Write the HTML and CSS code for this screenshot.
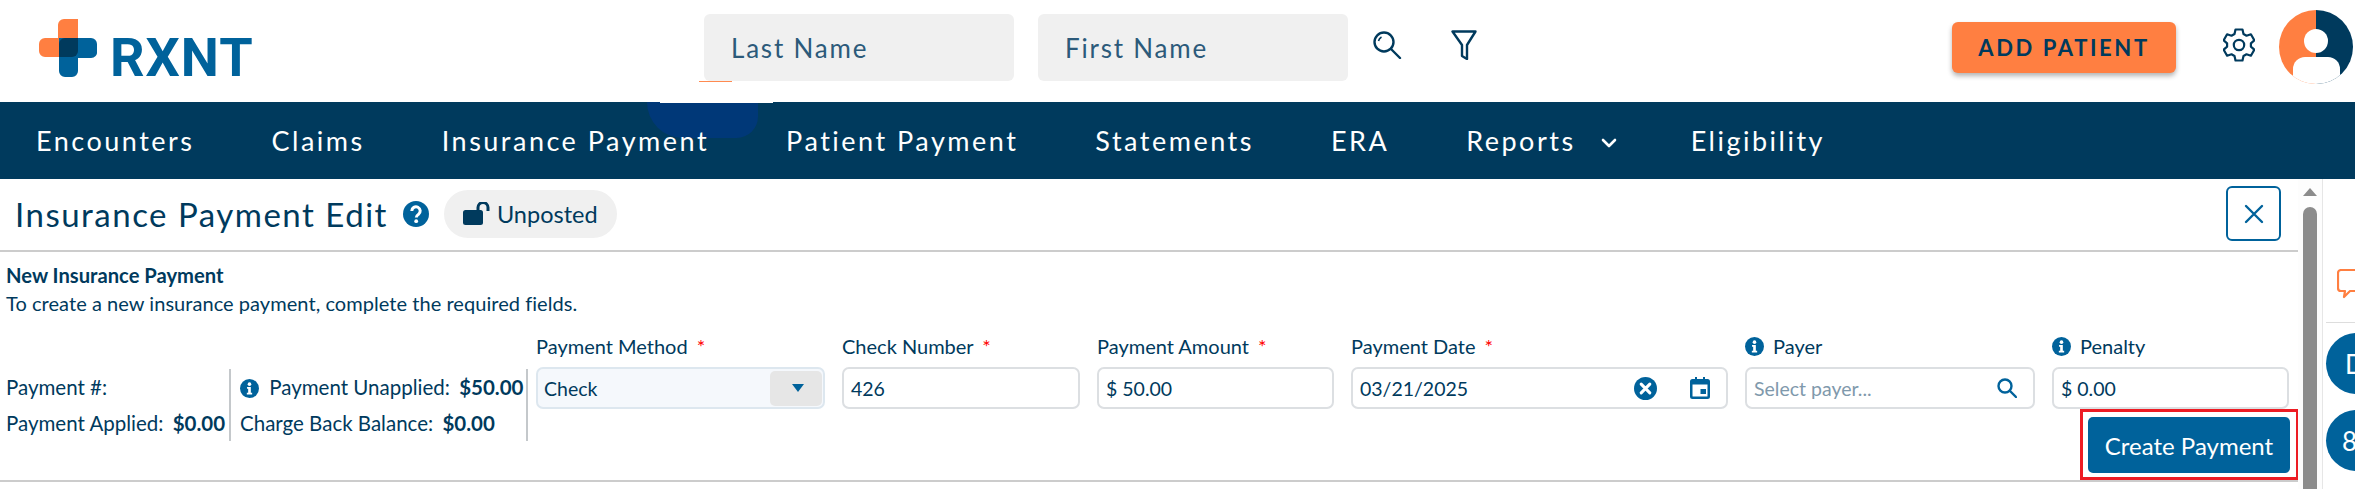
FILE: index.html
```html
<!DOCTYPE html>
<html lang="en">
<head>
  <meta charset="UTF-8" />
  <title>RXNT – Insurance Payment Edit</title>
  <link rel="stylesheet" href="styles.css">
</head>
<body>
  <header class="topbar">
    <a class="logo">
      <svg class="logo-mark" viewBox="0 0 58 58" width="58" height="58">
        <path fill="#ff7f41" d="M25 0h14v38H6a6 6 0 0 1-6-6V25a6 6 0 0 1 6-6h13V6a6 6 0 0 1 6-6z"/>
        <path fill="#00629b" d="M20 19h32a6 6 0 0 1 6 6v7a6 6 0 0 1-6 7H39v13a6 6 0 0 1-6 6H26a6 6 0 0 1-6-6z"/>
        <path fill="#003a5d" d="M26 19h13v13a6 6 0 0 1-6 6H20V25a6 6 0 0 1 6-6z"/>
      </svg>
      <span class="logo-text">RXNT</span>
    </a>
    <div class="patient-search">
      <div class="search-box">Last Name</div>
      <div class="search-box first">First Name</div>
      <svg class="icon-search" viewBox="0 0 30 28" width="30" height="28" fill="none" stroke="#003a5d" stroke-width="2.4">
        <circle cx="12" cy="11" r="9.5"/>
        <path d="M19 18l9 9" stroke-linecap="round"/>
        <path d="M6.5 10a6 6 0 0 1 3-4" stroke-width="1.6"/>
      </svg>
      <svg class="icon-filter" viewBox="0 0 26 30" width="26" height="30" fill="none" stroke="#003a5d" stroke-width="2.4" stroke-linejoin="round">
        <path d="M1.5 1.5h23L16 15v14l-5-3V15z"/>
      </svg>
    </div>
    <button class="add-patient">ADD PATIENT</button>
    <svg class="icon-gear" viewBox="0 0 32 34" width="32" height="34" fill="none" stroke="#003a5d" stroke-width="2.2" stroke-linejoin="round">
      <path d="M12.5 1.5h7l1 4.5 3 1.7 4.4-1.4 3.4 6-3.4 3.1v3.2l3.4 3.1-3.4 6-4.4-1.4-3 1.7-1 4.5h-7l-1-4.5-3-1.7-4.4 1.4-3.4-6 3.4-3.1v-3.2L.7 12.3l3.4-6 4.4 1.4 3-1.7z"/>
      <circle cx="16" cy="17" r="5.2"/>
    </svg>
    <div class="avatar">
      <span class="avatar-head"></span>
      <span class="avatar-body"></span>
    </div>
  </header>

  <nav class="mainnav">
    <span class="nav-smudge"></span>
    <span class="nav-strip"></span>
    <span class="nav-line"></span>
    <a>Encounters</a>
    <a>Claims</a>
    <a>Insurance Payment</a>
    <a>Patient Payment</a>
    <a>Statements</a>
    <a>ERA</a>
    <a class="has-menu">Reports<svg viewBox="0 0 16 10" width="16" height="10" fill="none" stroke="#fff" stroke-width="2.6" stroke-linecap="round" stroke-linejoin="round"><path d="M2 2l6 6 6-6"/></svg></a>
    <a>Eligibility</a>
  </nav>

  <div class="workspace">
    <main class="content">
      <div class="title-row">
        <h1>Insurance Payment Edit</h1>
        <svg class="icon-help" viewBox="0 0 26 26" width="26" height="26">
          <circle cx="13" cy="13" r="13" fill="#00629b"/>
          <path d="M8.8 10a4.2 4.2 0 1 1 6.6 3.4c-1.4 1-2.1 1.5-2.1 3" fill="none" stroke="#fff" stroke-width="3"/>
          <circle cx="13.2" cy="20.2" r="1.9" fill="#fff"/>
        </svg>
        <div class="status-chip">
          <svg viewBox="0 0 27 23" width="27" height="23">
            <rect x="0" y="8" width="20" height="15" rx="2.5" fill="#003a5d"/>
            <path d="M15 8V5.5a5 5 0 0 1 10 0V9" fill="none" stroke="#003a5d" stroke-width="3"/>
          </svg>
          <span>Unposted</span>
        </div>
        <button class="close-btn">
          <svg viewBox="0 0 20 20" width="20" height="20" stroke="#00629b" stroke-width="2.4" stroke-linecap="round"><path d="M2 2l16 16M18 2L2 18"/></svg>
        </button>
      </div>

      <section class="payment-form">
        <h2>New Insurance Payment</h2>
        <p>To create a new insurance payment, complete the required fields.</p>
        <div class="form-row">
          <div class="stats stats-left">
            <div>Payment #:</div>
            <div>Payment Applied: <b>$0.00</b></div>
          </div>
          <div class="stats stats-right">
            <div>
              <svg class="icon-info" viewBox="0 0 20 20" width="19" height="19"><circle cx="10" cy="10" r="10" fill="#00629b"/><circle cx="10" cy="5.4" r="1.9" fill="#fff"/><path d="M7.4 8.4h4v6h1.4v1.8H7.2v-1.8h1.4v-4.2H7.4z" fill="#fff"/></svg>
              Payment Unapplied: <b>$50.00</b>
            </div>
            <div>Charge Back Balance: <b>$0.00</b></div>
          </div>
          <div class="fields">
            <div class="field">
              <label>Payment Method <i>*</i></label>
              <div class="control select">
                <span>Check</span>
                <span class="select-btn"><svg viewBox="0 0 12 8" width="12" height="8"><path d="M0 0h12L6 8z" fill="#00629b"/></svg></span>
              </div>
            </div>
            <div class="field">
              <label>Check Number <i>*</i></label>
              <div class="control">426</div>
            </div>
            <div class="field">
              <label>Payment Amount <i>*</i></label>
              <div class="control">$ 50.00</div>
            </div>
            <div class="field">
              <label>Payment Date <i>*</i></label>
              <div class="control">
                <span>03/21/2025</span>
                <svg class="icon-clear" viewBox="0 0 24 24" width="23" height="23"><circle cx="12" cy="12" r="12" fill="#00629b"/><path d="M7.5 7.5l9 9M16.5 7.5l-9 9" stroke="#fff" stroke-width="3.2" stroke-linecap="round"/></svg>
                <svg class="icon-date" viewBox="0 0 20 22" width="20" height="22"><path d="M2.500 2H5V0h2v2h6V0h2v2h2.500A2.500 2.500 0 0 1 20 4.500v15a2.500 2.500 0 0 1-2.500 2.500h-15A2.500 2.500 0 0 1 0 19.500v-15A2.500 2.500 0 0 1 2.500 2zM2.500 7.500v11.500a.5.5 0 0 0 .5.5h14a.5.5 0 0 0 .5-.5V7.500z" fill="#00629b"/><rect x="10.500" y="12" width="5.500" height="5" fill="#00629b"/></svg>
              </div>
            </div>
            <div class="field">
              <label class="with-info">
                <svg class="icon-info" viewBox="0 0 20 20" width="19" height="19"><circle cx="10" cy="10" r="10" fill="#00629b"/><circle cx="10" cy="5.4" r="1.9" fill="#fff"/><path d="M7.4 8.4h4v6h1.4v1.8H7.2v-1.8h1.4v-4.2H7.4z" fill="#fff"/></svg>
                <span>Payer</span>
              </label>
              <div class="control">
                <span class="placeholder">Select payer...</span>
                <svg class="icon-lookup" viewBox="0 0 20 20" width="20" height="20" fill="none" stroke="#00629b" stroke-width="2.400"><circle cx="8" cy="8" r="6.500"/><path d="M13 13l6 6" stroke-linecap="round"/></svg>
              </div>
            </div>
            <div class="field">
              <label class="with-info">
                <svg class="icon-info" viewBox="0 0 20 20" width="19" height="19"><circle cx="10" cy="10" r="10" fill="#00629b"/><circle cx="10" cy="5.4" r="1.9" fill="#fff"/><path d="M7.4 8.4h4v6h1.4v1.8H7.2v-1.8h1.4v-4.2H7.4z" fill="#fff"/></svg>
                <span>Penalty</span>
              </label>
              <div class="control">$ 0.00</div>
            </div>
            <div class="create-wrap">
              <button class="create-btn">Create Payment</button>
            </div>
          </div>
        </div>
      </section>
    </main>

    <div class="scrollbar">
      <span class="scroll-up"></span>
      <span class="scroll-thumb"></span>
    </div>

    <aside class="side">
      <svg class="icon-chat" viewBox="0 0 30 30" width="30" height="30" fill="none" stroke="#ff7f41" stroke-width="2.200" stroke-linejoin="round">
        <path d="M4 1h26v21H13l-6 6 1-6H4a3 3 0 0 1-3-3V4a3 3 0 0 1 3-3z"/>
      </svg>
      <div class="side-rule"></div>
      <div class="side-badge top">D</div>
      <div class="side-badge">8</div>
    </aside>
  </div>
</body>
</html>
```

FILE: styles.css
```css
:root {
  --navy: #003a5d;
  --blue: #00629b;
  --orange: #ff7f41;
  --field-border: #dcdfe2;
}

* {
  box-sizing: border-box;
}

html, body {
  height: 100%;
}

body {
  margin: 0;
  font-family: "Lato", sans-serif;
  color: var(--navy);
  background: #fff;
  overflow: hidden;
}

button {
  font-family: inherit;
  border: none;
}

/* top bar */
.topbar {
  display: flex;
  align-items: flex-start;
  height: 102px;
}

.logo {
  display: flex;
  align-items: flex-end;
  margin: 19px 0 0 39px;
  width: 665px;
}

.logo-mark {
  display: block;
}

.logo-text {
  margin-left: 13px;
  font-family: "Roboto", sans-serif;
  font-weight: 700;
  font-size: 54px;
  line-height: 39px;
  letter-spacing: 1px;
  color: var(--blue);
}

.patient-search {
  display: flex;
  align-items: flex-start;
  margin-top: 14px;
  width: 1248px;
}

.search-box {
  width: 310px;
  height: 67px;
  padding-left: 27px;
  background: #f0f0f0;
  border-radius: 6px;
  font-size: 26px;
  line-height: 68px;
  letter-spacing: 1.8px;
  color: #2c5a7a;
}

.search-box.first {
  margin-left: 24px;
  width: 310px;
}

.icon-search {
  margin: 17px 0 0 24px;
}

.icon-filter {
  margin: 16px 0 0 49px;
}

.add-patient {
  width: 224px;
  height: 51px;
  margin-top: 22px;
  background: var(--orange);
  border-radius: 6px;
  box-shadow: 0 3px 5px rgba(0, 0, 0, 0.3);
  color: var(--navy);
  font-weight: 700;
  font-size: 22px;
  letter-spacing: 2.6px;
}

.icon-gear {
  margin: 28px 0 0 47px;
}

.avatar {
  position: relative;
  width: 74px;
  height: 74px;
  margin: 10px 0 0 24px;
  border-radius: 50%;
  overflow: hidden;
  background: linear-gradient(to right, var(--orange) 50%, var(--navy) 50%);
}

.avatar-head {
  position: absolute;
  left: 25px;
  top: 19px;
  width: 24px;
  height: 24px;
  border-radius: 50%;
  background: #fff;
}

.avatar-body {
  position: absolute;
  left: 14px;
  top: 47px;
  width: 47px;
  height: 34px;
  border-radius: 12px 12px 0 0;
  background: #fff;
}

/* main nav */
.mainnav {
  position: relative;
  display: flex;
  align-items: center;
  gap: 77px;
  height: 77px;
  padding-left: 36px;
  background: var(--navy);
}

.mainnav a {
  position: relative;
  color: #fff;
  font-size: 27px;
  letter-spacing: 2.5px;
}

.has-menu svg {
  margin: 0 -3px 0 25px;
  vertical-align: 3px;
}

/* leftovers from the screen capture */
.nav-smudge {
  position: absolute;
  left: 647px;
  top: 0;
  width: 111px;
  height: 36px;
  background: #003878;
  border-radius: 0 0 30px 50px;
}

.nav-strip {
  position: absolute;
  left: 660px;
  top: 0;
  width: 113px;
  height: 1px;
  background: #fff;
}

.nav-line {
  position: absolute;
  left: 699px;
  top: -21px;
  width: 33px;
  height: 1px;
  background: #ff8a50;
}

/* workspace */
.workspace {
  display: flex;
  height: 310px;
}

.content {
  width: 2298px;
  flex: none;
}

.title-row {
  display: flex;
  align-items: center;
  height: 73px;
  padding: 0 17px 2px 15px;
  border-bottom: 2px solid #ccc;
}

h1 {
  margin: 0;
  font-size: 33px;
  font-weight: 400;
  letter-spacing: 1.5px;
  color: var(--navy);
}

.icon-help {
  margin-left: 15px;
}

.status-chip {
  display: flex;
  align-items: center;
  gap: 7px;
  height: 48px;
  margin-left: 15px;
  padding: 0 19px;
  background: #f0f0f0;
  border-radius: 24px;
  font-size: 23.5px;
}

.close-btn {
  display: flex;
  align-items: center;
  justify-content: center;
  width: 55px;
  height: 55px;
  margin-left: auto;
  padding: 0;
  background: #fff;
  border: 2px solid var(--blue);
  border-radius: 6px;
}

.payment-form {
  height: 230px;
  padding: 12px 0 0 6px;
  border-bottom: 2px solid #ccc;
}

h2 {
  margin: 0;
  font-size: 20.2px;
  font-weight: 700;
  line-height: 22px;
}

.payment-form p {
  margin: 6px 0 0;
  font-size: 20px;
  letter-spacing: 0.05px;
  line-height: 22px;
}

.form-row {
  display: flex;
  margin-top: 18px;
  font-size: 20px;
}

.stats {
  display: flex;
  flex-direction: column;
  gap: 14px;
  height: 72px;
  margin-top: 37px;
  font-size: 20.5px;
  line-height: 22px;
  padding-top: 7px;
  border-right: 2px solid #c4c8cb;
}

.stats b {
  font-weight: 700;
  margin-left: 4px;
}

.stats-left {
  width: 225px;
  white-space: nowrap;
}

.stats-right {
  width: 297px;
  padding-left: 9px;
  white-space: nowrap;
}

.stats-right .icon-info {
  vertical-align: -3px;
  margin-right: 5px;
}

.fields {
  display: grid;
  grid-template-columns: 289px 238px 237px 377px 290px 237px;
  column-gap: 17px;
  align-content: start;
  margin-left: 8px;
}

.field label {
  display: block;
  height: 28px;
  margin-bottom: 7px;
  line-height: 28px;
}

.field label i {
  color: #f00;
  font-style: normal;
  margin-left: 4px;
}

.field .with-info {
  display: flex;
  align-items: center;
  gap: 9px;
}

.control {
  display: flex;
  align-items: center;
  height: 42px;
  padding: 0 16px 0 7px;
  background: #fff;
  border: 2px solid var(--field-border);
  border-radius: 7px;
  font-size: 19.5px;
}

.control > svg {
  flex: none;
}

.icon-clear {
  margin-left: auto;
}

.icon-date {
  margin-left: 33px;
}

.icon-lookup {
  margin-left: auto;
}

.placeholder {
  color: #7f99ac;
}

.select {
  padding: 0 1px 0 6px;
  background: #f5f8fc;
  border-color: #dde7ef;
  justify-content: space-between;
}

.select-btn {
  display: flex;
  align-items: center;
  justify-content: center;
  width: 52px;
  height: 35px;
  padding-left: 3px;
  background: #e6e6e6;
  border-radius: 5px;
}

.create-wrap {
  grid-column: 6;
  justify-self: end;
  margin-right: -10px;
  padding: 5px 6px 4px 5px;
  border: 3px solid #ed1c24;
}

.create-btn {
  display: block;
  width: 202px;
  height: 56px;
  background: var(--blue);
  border-radius: 5px;
  color: #fff;
  font-size: 24px;
}

/* scrollbar */
.scrollbar {
  display: flex;
  flex-direction: column;
  align-items: center;
  width: 25px;
  flex: none;
  padding: 9px 1px 0 0;
  background: #fdfdfd;
  border-right: 1px solid #e6e6e6;
}

.scroll-up {
  width: 0;
  height: 0;
  border-left: 7px solid transparent;
  border-right: 7px solid transparent;
  border-bottom: 8px solid #8c8c8c;
}

.scroll-thumb {
  width: 14px;
  flex: 1;
  margin-top: 11px;
  background: #8c8c8c;
  border-radius: 7px 7px 0 0;
}

/* right rail, cut off by the window */
.side {
  flex: none;
  width: 60px;
  padding: 90px 0 0 3px;
}

.icon-chat {
  display: block;
  margin-left: 11px;
}

.side-rule {
  height: 1px;
  margin-top: 23px;
  background: #ddd;
}

.side-badge {
  display: flex;
  align-items: center;
  width: 61px;
  height: 61px;
  margin-top: 16px;
  padding-left: 16px;
  border-radius: 50%;
  background: var(--blue);
  color: #fff;
  font-size: 26px;
}

.side-badge.top {
  margin-top: 10px;
  padding-left: 19px;
}
```
